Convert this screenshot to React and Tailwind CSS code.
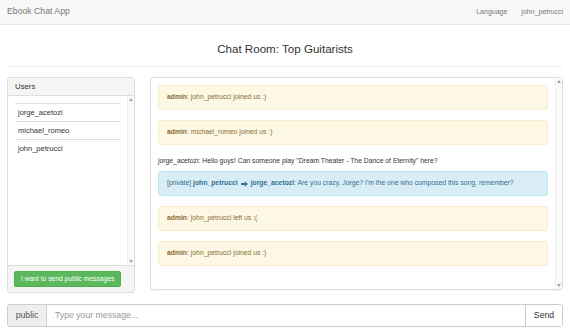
import React from 'react';

const messages = [
  { type: 'system', user: 'admin', text: 'john_petrucci joined us :)' },
  { type: 'system', user: 'admin', text: 'michael_romeo joined us :)' },
  { type: 'public', user: 'jorge_acetozi', text: 'Hello guys! Can someone play "Dream Theater - The Dance of Eternity" here?' },
  { type: 'private', from: 'john_petrucci', to: 'jorge_acetozi', text: "Are you crazy, Jorge? I'm the one who composed this song, remember?" },
  { type: 'system', user: 'admin', text: 'john_petrucci left us :(' },
  { type: 'system', user: 'admin', text: 'john_petrucci joined us :)' },
];

const users = ['jorge_acetozi', 'michael_romeo', 'john_petrucci'];

function Scrollbar() {
  return (
    <div className="w-[7px] shrink-0 flex flex-col justify-between items-center py-[2px] border-l border-[#f0f0f0] bg-[#fafafa]">
      <svg width="4" height="3" viewBox="0 0 4 3">
        <path d="M2 0 L4 3 L0 3 Z" fill="#a3a3a3" />
      </svg>
      <svg width="4" height="3" viewBox="0 0 4 3">
        <path d="M0 0 L4 0 L2 3 Z" fill="#a3a3a3" />
      </svg>
    </div>
  );
}

function Message({ m }) {
  if (m.type === 'system') {
    return (
      <div className="h-[25px] mb-[10px] flex items-center px-[8px] bg-[#fcf8e3] border border-[#faebcc] rounded-[3px] text-[#8a6d3b] whitespace-nowrap">
        <span className="font-bold">{m.user}</span>: {m.text}
      </div>
    );
  }
  if (m.type === 'private') {
    return (
      <div className="h-[25px] mb-[10px] flex items-center px-[8px] bg-[#d9edf7] border border-[#bce8f1] rounded-[3px] text-[#31708f] whitespace-nowrap">
        <span>[private]&nbsp;</span>
        <span className="font-bold">{m.from}</span>
        <svg className="mx-[3px]" width="7" height="6" viewBox="0 0 8 7">
          <path d="M0 2.3 H4.3 V0.2 L8 3.5 L4.3 6.8 V4.7 H0 Z" fill="#31708f" />
        </svg>
        <span className="font-bold">{m.to}</span>: {m.text}
      </div>
    );
  }
  return (
    <div className="h-[12px] mb-[4px] flex items-center text-[#333] whitespace-nowrap">
      {m.user}: {m.text}
    </div>
  );
}

export default function App() {
  return (
    <div className="w-[570px] h-[333px] bg-white text-[#333] font-['Liberation_Sans',Arial,sans-serif] overflow-hidden">
      <nav className="h-[25px] bg-[#f8f8f8] border-b border-[#e7e7e7] flex items-center justify-between pl-[7px] pr-[7px]">
        <span className="text-[8.7px] text-[#777]">Ebook Chat App</span>
        <div className="flex items-center gap-[14px] text-[7px] text-[#777]">
          <span>Language</span>
          <span>john_petrucci</span>
        </div>
      </nav>

      <div className="mx-[7px] border-b border-[#eee] pt-[15px] pb-[9px] text-center">
        <h1 className="text-[11.6px] leading-[17px] text-[#333]">Chat Room: Top Guitarists</h1>
      </div>

      <div className="flex gap-[15px] px-[7px] mt-[10px] items-start">
        <div className="w-[128px] h-[216px] border border-[#ddd] rounded-[3px] flex flex-col overflow-hidden">
          <div className="h-[18px] shrink-0 bg-[#f5f5f5] border-b border-[#ddd] flex items-center px-[7px] text-[7.8px]">
            Users
          </div>
          <div className="flex-1 flex min-h-0">
            <div className="flex-1 pt-[7px] px-[7px]">
              {users.map((u) => (
                <div key={u} className="h-[18px] border-t border-[#ddd] flex items-center px-[3px] text-[7.5px]">
                  {u}
                </div>
              ))}
            </div>
            <Scrollbar />
          </div>
          <div className="h-[27px] shrink-0 bg-[#f5f5f5] border-t border-[#ddd] flex items-center px-[6px]">
            <button className="h-[16px] px-[6px] bg-[#5cb85c] border border-[#4cae4c] rounded-[2px] text-white text-[6.7px] whitespace-nowrap">
              I want to send public messages
            </button>
          </div>
        </div>

        <div className="flex-1 h-[213px] border border-[#ddd] rounded-[3px] flex overflow-hidden shadow-[0_1px_1px_rgba(0,0,0,0.05)]">
          <div className="flex-1 pt-[7px] px-[7px] text-[6.8px]">
            {messages.map((m, i) => (
              <Message key={i} m={m} />
            ))}
          </div>
          <Scrollbar />
        </div>
      </div>

      <div className="mx-[7px] mt-[11px] h-[23px] flex border border-[#ccc] rounded-[3px] overflow-hidden text-[8.7px]">
        <div className="w-[39px] bg-[#eee] border-r border-[#ccc] flex items-center justify-center text-[#555]">
          public
        </div>
        <input
          className="flex-1 px-[8px] outline-none text-[8.7px] placeholder:text-[#999]"
          placeholder="Type your message..."
        />
        <button className="w-[37px] bg-white border-l border-[#ccc] text-[#333] text-[8.7px]">Send</button>
      </div>
    </div>
  );
}
